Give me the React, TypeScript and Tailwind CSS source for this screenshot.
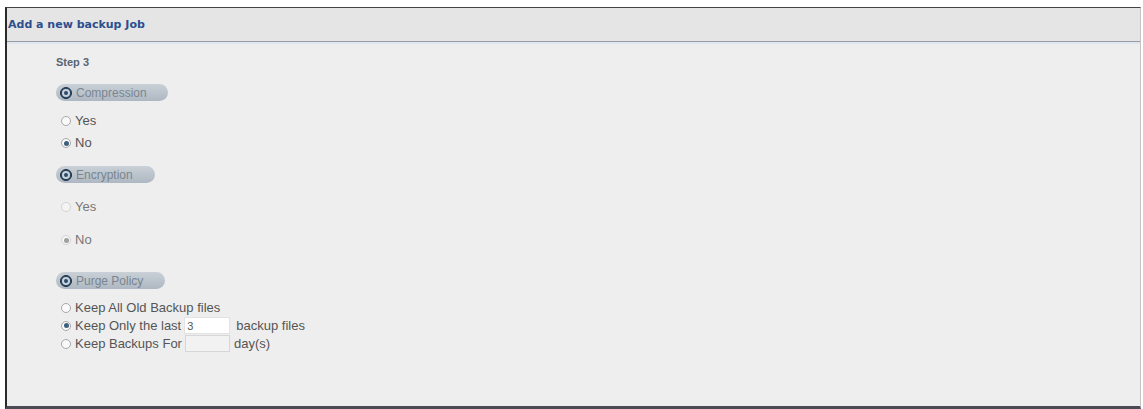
import React, { useState } from "react";

const font = { fontFamily: '"Liberation Sans", Arial, sans-serif' };

const Radio = ({ checked, disabled }: { checked?: boolean; disabled?: boolean }) => (
  <span
    className={`inline-flex items-center justify-center w-[10px] h-[10px] rounded-full border mr-[4px] ${
      disabled ? "border-[#d4d4d4] bg-[#f4f4f4]" : "border-[#a8a8a8] bg-[#fafafa]"
    }`}
  >
    {checked && (
      <span className={`w-[5px] h-[5px] rounded-full ${disabled ? "bg-[#a0a0a0]" : "bg-[#3d5f7d]"}`} />
    )}
  </span>
);

const SectionPill = ({ label, width }: { label: string; width: string }) => (
  <div
    className={`flex items-center h-[17px] ${width} rounded-full bg-gradient-to-b from-[#c9d0d7] to-[#aeb8c2] pl-[4px]`}
  >
    <span className="flex items-center justify-center w-[12px] h-[12px] rounded-full bg-[#2d4b66] border border-[#1d3247]">
      <span className="flex items-center justify-center w-[8px] h-[8px] rounded-full bg-[#c8d2dc]">
        <span className="w-[4px] h-[4px] rounded-full bg-[#2d4b66]" />
      </span>
    </span>
    <span className="ml-[4px] text-[12px] text-[#7a8590]">{label}</span>
  </div>
);

const App: React.FC = () => {
  const [keepLast, setKeepLast] = useState<string>("3");
  const [keepDays, setKeepDays] = useState<string>("");

  return (
    <div className="w-[1143px] h-[409px] bg-white overflow-hidden" style={font}>
      <div className="h-[7px]" />
      <div className="ml-[5px] w-[1136px] h-[402px] border-l-2 border-t border-b-[3px] border-r border-l-[#2a2a2a] border-t-[#444] border-b-[#4a4a55] border-r-[#c4c4c4] bg-[#eeeeee] flex flex-col">
        <div className="h-[33px] bg-[#e5e5e5] pt-[3px] pl-[1px]">
          <span
            className="text-[11px] font-bold text-[#2b4f8f]"
            style={{ fontFamily: '"DejaVu Sans", Verdana, sans-serif' }}
          >
            Add a new backup Job
          </span>
        </div>
        <div className="h-[1px] bg-[#9a9ea4]" />
        <div className="h-[2px] bg-[#dfe6f0]" />
        <div className="flex-1 pl-[49px] text-[13px] text-[#555]">
          <div className="mt-[10px] h-[16px] flex items-center text-[11px] font-bold text-[#5a6470]">
            Step 3
          </div>
          <div className="mt-[14px]">
            <SectionPill label="Compression" width="w-[112px]" />
          </div>
          <div className="mt-[12px] h-[16px] flex items-center pl-[5px]">
            <Radio />
            Yes
          </div>
          <div className="mt-[6px] h-[16px] flex items-center pl-[5px]">
            <Radio checked />
            No
          </div>
          <div className="mt-[15px]">
            <SectionPill label="Encryption" width="w-[99px]" />
          </div>
          <div className="mt-[16px] h-[16px] flex items-center pl-[5px] text-[#777]">
            <Radio disabled />
            Yes
          </div>
          <div className="mt-[17px] h-[16px] flex items-center pl-[5px] text-[#777]">
            <Radio checked disabled />
            No
          </div>
          <div className="mt-[24px]">
            <SectionPill label="Purge Policy" width="w-[109px]" />
          </div>
          <div className="mt-[11px] h-[16px] flex items-center pl-[5px]">
            <Radio />
            Keep All Old Backup files
          </div>
          <div className="mt-[1px] h-[17px] flex items-center pl-[5px]">
            <Radio checked />
            Keep Only the last
            <input
              className="ml-[3px] w-[46px] h-[17px] bg-white border border-[#e2e2e2] px-[2px] text-[11px] text-[#555] outline-none"
              value={keepLast}
              onChange={(e) => setKeepLast(e.target.value)}
            />
            <span className="ml-[6px]">backup files</span>
          </div>
          <div className="mt-[1px] h-[17px] flex items-center pl-[5px]">
            <Radio />
            Keep Backups For
            <input
              className="ml-[3px] w-[45px] h-[17px] bg-[#f2f2f2] border border-[#d6d6d6] px-[2px] text-[11px] outline-none"
              value={keepDays}
              onChange={(e) => setKeepDays(e.target.value)}
            />
            <span className="ml-[4px]">day(s)</span>
          </div>
        </div>
      </div>
    </div>
  );
};

export default App;
